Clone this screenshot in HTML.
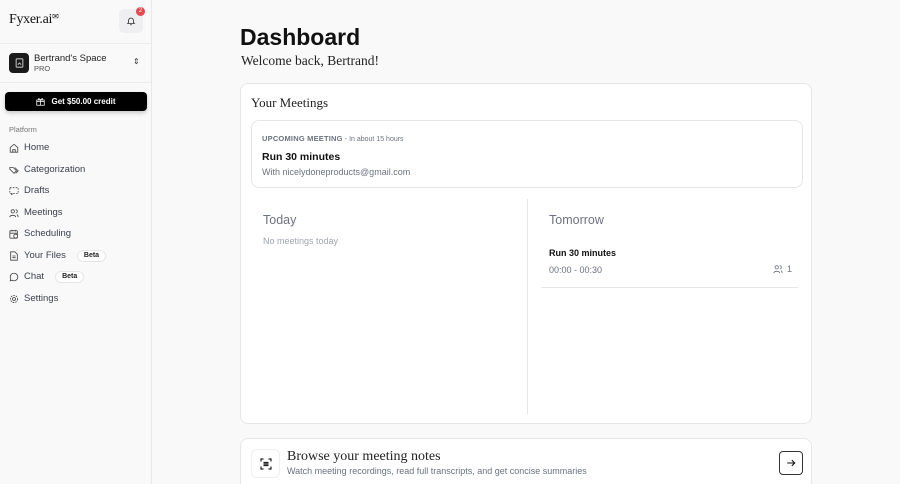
<!DOCTYPE html>
<html><head><meta charset="utf-8"><style>
*{box-sizing:border-box;margin:0;padding:0}
html,body{width:900px;height:484px;overflow:hidden}
body{background:#f9f9fa;font-family:"Liberation Sans",sans-serif;color:#111;position:relative}
.sb{position:absolute;left:0;top:0;width:152px;height:484px;background:#f9f9fa;border-right:1px solid #e8e8ea}
.abs{position:absolute}
.nav{position:absolute;left:9px;height:12px;line-height:12px;font-size:9.5px;color:#3a3f4a;display:flex;align-items:center;gap:5px}
.nav svg{width:10px;height:10px}
.beta{font-size:7px;font-weight:bold;color:#222;border:1px solid #e6e6e8;background:#fff;border-radius:7px;height:12px;line-height:10px;padding:0 6px;margin-left:6px}
.card{position:absolute;background:#fff;border:1px solid #e6e6e9;border-radius:8px}
.serif{font-family:"Liberation Serif",serif}
.gray{color:#6b7280}
</style></head><body>
<div class="sb">
  <div class="abs serif" style="left:9px;top:12px;font-size:14px;letter-spacing:-0.3px">Fyxer.ai<span style="font-size:8px;vertical-align:top">✉</span></div>
  <div class="abs" style="left:119px;top:9px;width:24px;height:24px;background:#efeff1;border-radius:5px;display:flex;align-items:center;justify-content:center">
    <svg width="10" height="10" viewBox="0 0 24 24" fill="none" stroke="#333" stroke-width="2"><path d="M6 16V11a6 6 0 0112 0v5l2 2H4z"/><path d="M10 21h4"/></svg>
  </div>
  <div class="abs" style="left:136px;top:7px;width:9px;height:9px;border-radius:50%;background:#e5484d;color:#fff;font-size:6px;text-align:center;line-height:9px">2</div>
  <div class="abs" style="left:0;top:43px;width:152px;border-top:1px solid #ececee"></div>
  <div class="abs" style="left:9px;top:53px;width:20px;height:20px;background:#1a1a1a;border-radius:4px;display:flex;align-items:center;justify-content:center">
    <svg width="9" height="10" viewBox="0 0 10 12" fill="none" stroke="#bbb" stroke-width="1.3"><rect x="1" y="1" width="8" height="10" rx="1"/><path d="M3 8l2-2 2 2"/></svg>
  </div>
  <div class="abs" style="left:34px;top:53px;font-size:9.5px;color:#222">Bertrand's Space</div>
  <div class="abs" style="left:34px;top:64px;font-size:7.5px;color:#555">PRO</div>
  <div class="abs" style="left:133px;top:57px;font-size:8px;color:#333">⇕</div>
  <div class="abs" style="left:0;top:82px;width:152px;border-top:1px solid #ececee"></div>
  <div class="abs" style="left:5px;top:92px;width:142px;height:19px;background:#000;border-radius:4px;color:#fff;font-size:8px;font-weight:bold;display:flex;align-items:center;justify-content:center;gap:6px;box-shadow:0 2px 4px rgba(0,0,0,.2)">
    <svg width="9" height="9" viewBox="0 0 12 12" fill="none" stroke="#fff" stroke-width="1"><rect x="1" y="4" width="10" height="7"/><path d="M1 6h10M6 4v7M6 4C4 1 2 2 4 4M6 4c2-3 4-2 2 0"/></svg>Get $50.00 credit</div>
  <div class="abs" style="left:9px;top:125px;font-size:7.5px;color:#777">Platform</div>
  <div class="nav" style="top:142px"><svg viewBox="0 0 12 12" fill="none" stroke="#444" stroke-width="1"><path d="M1.5 5.5L6 1.5l4.5 4V11h-9z"/><path d="M4.5 11V8h3v3"/></svg>Home</div>
  <div class="nav" style="top:164px"><svg viewBox="0 0 12 12" fill="none" stroke="#444" stroke-width="1"><path d="M1 3h4l4 4-3 3-5-5z"/><path d="M7 3l4 4-3 3"/></svg>Categorization</div>
  <div class="nav" style="top:185px"><svg viewBox="0 0 12 12" fill="none" stroke="#444" stroke-width="1" stroke-dasharray="2 1.5"><rect x="1" y="2" width="10" height="7"/><path d="M3 9v2l2-2"/></svg>Drafts</div>
  <div class="nav" style="top:207px"><svg viewBox="0 0 12 12" fill="none" stroke="#444" stroke-width="1"><circle cx="4.5" cy="4" r="2"/><path d="M1 11c0-3 7-3 7 0M8 2a2 2 0 010 4M9.5 8c1 .5 1.5 1.5 1.5 3"/></svg>Meetings</div>
  <div class="nav" style="top:228px"><svg viewBox="0 0 12 12" fill="none" stroke="#444" stroke-width="1"><rect x="1" y="2" width="9" height="9" rx="1"/><path d="M1 5h9M3.5 1v2M7.5 1v2"/><circle cx="8" cy="8.5" r="2.3" fill="#f9f9fa"/></svg>Scheduling</div>
  <div class="nav" style="top:250px"><svg viewBox="0 0 12 12" fill="none" stroke="#444" stroke-width="1"><path d="M2 1h5l3 3v7H2z"/><path d="M4 6h4M4 8h4"/></svg>Your Files<span class="beta">Beta</span></div>
  <div class="nav" style="top:271px"><svg viewBox="0 0 12 12" fill="none" stroke="#444" stroke-width="1"><path d="M6 1.5a4.5 4.5 0 11-2.2 8.4L1.5 10.5l.6-2.3A4.5 4.5 0 016 1.5z"/></svg>Chat<span class="beta">Beta</span></div>
  <div class="nav" style="top:293px"><svg viewBox="0 0 12 12" fill="none" stroke="#444" stroke-width="1"><circle cx="6" cy="6" r="1.8"/><circle cx="6" cy="6" r="4.3" stroke-dasharray="2 1.2"/></svg>Settings</div>
</div>

<div class="abs" style="left:240px;top:24px;font-size:23px;font-weight:bold;color:#111">Dashboard</div>
<div class="abs serif" style="left:241px;top:53px;font-size:13.5px;color:#222">Welcome back, Bertrand!</div>

<div class="card" style="left:240px;top:83px;width:572px;height:341px">
  <div class="abs serif" style="left:10px;top:11px;font-size:13px;color:#222">Your Meetings</div>
  <div class="card" style="left:10px;top:36px;width:552px;height:68px">
    <div class="abs" style="left:10px;top:13px;font-size:7.5px;color:#6b7280"><b style="font-weight:bold;letter-spacing:.2px">UPCOMING MEETING</b> <span style="font-size:7px">- In about 15 hours</span></div>
    <div class="abs" style="left:10px;top:30px;font-size:10.5px;font-weight:bold;color:#111">Run 30 minutes</div>
    <div class="abs gray" style="left:10px;top:46px;font-size:9px">With nicelydoneproducts@gmail.com</div>
  </div>
  <div class="abs" style="left:286px;top:115px;height:215px;border-left:1px solid #e6e6e9"></div>
  <div class="abs" style="left:22px;top:129px;font-size:12.5px;color:#6b7280">Today</div>
  <div class="abs" style="left:22px;top:152px;font-size:9px;color:#a0a5b0">No meetings today</div>
  <div class="abs" style="left:308px;top:129px;font-size:12.5px;color:#6b7280">Tomorrow</div>
  <div class="abs" style="left:308px;top:164px;font-size:9px;font-weight:bold;color:#111">Run 30 minutes</div>
  <div class="abs gray" style="left:308px;top:181px;font-size:9px">00:00 - 00:30</div>
  <div class="abs gray" style="left:532px;top:180px;font-size:9px;display:flex;align-items:center;gap:4px"><svg width="10" height="10" viewBox="0 0 12 12" fill="none" stroke="#6b7280" stroke-width="1"><circle cx="4.5" cy="4" r="2"/><path d="M1 11c0-3 7-3 7 0M8 2a2 2 0 010 4M9.5 8c1 .5 1.5 1.5 1.5 3"/></svg>1</div>
  <div class="abs" style="left:300px;top:203px;width:257px;border-top:1px solid #e6e6e9"></div>
</div>

<div class="card" style="left:240px;top:438px;width:572px;height:60px">
  <div class="abs" style="left:10px;top:10px;width:29px;height:29px;border:1px solid #eee;border-radius:6px;display:flex;align-items:center;justify-content:center">
    <svg width="12" height="12" viewBox="0 0 12 12" fill="none" stroke="#222" stroke-width="1.2"><path d="M1 3.5V1h2.5M8.5 1H11v2.5M11 8.5V11H8.5M3.5 11H1V8.5M3.5 4.5h5M3.5 6h5M3.5 7.5h5"/></svg>
  </div>
  <div class="abs serif" style="left:46px;top:10px;font-size:14px;color:#222">Browse your meeting notes</div>
  <div class="abs gray" style="left:46px;top:27px;font-size:9px">Watch meeting recordings, read full transcripts, and get concise summaries</div>
  <div class="abs" style="left:538px;top:12px;width:24px;height:24px;border:1px solid #333;border-radius:4px;display:flex;align-items:center;justify-content:center">
    <svg width="10" height="10" viewBox="0 0 12 12" fill="none" stroke="#111" stroke-width="1.3"><path d="M1.5 6h9M7 2.5L10.5 6 7 9.5"/></svg>
  </div>
</div>
</body></html>
